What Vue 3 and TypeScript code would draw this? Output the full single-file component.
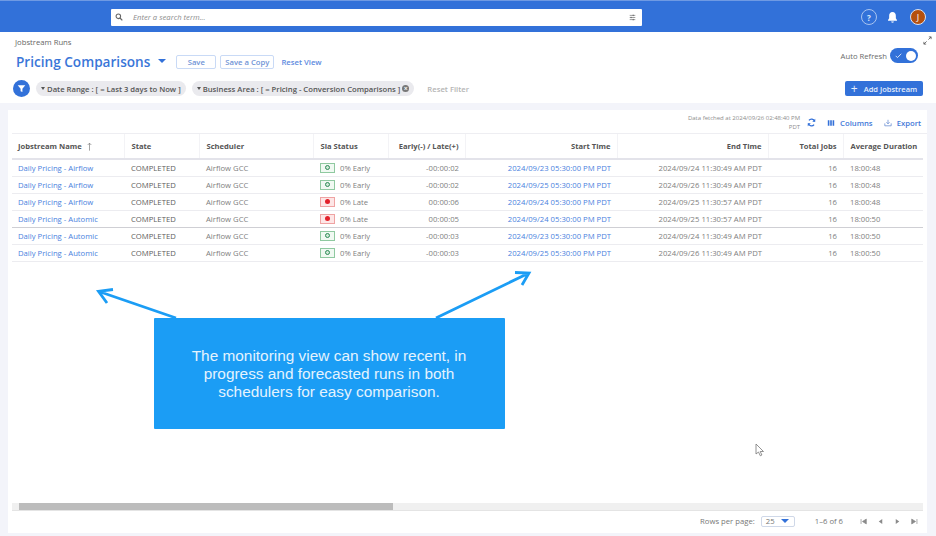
<template>
  <div class="page">
    <header class="topbar">
      <div class="search">
        <svg class="search-icon" viewBox="0 0 12 12" width="8" height="8"><circle cx="5" cy="5" r="3.4" fill="none" stroke="#666" stroke-width="1.6" /><path d="M7.5 7.5L11 11" stroke="#666" stroke-width="1.8" /></svg>
        <span class="search-text">Enter a search term...</span>
        <svg class="tune" viewBox="0 0 10 10" width="7" height="7"><path d="M1 2h8M1 5h8M1 8h8" stroke="#777" stroke-width="1" /><path d="M6 1v2M3 4v2M6 7v2" stroke="#555" stroke-width="1.2" /></svg>
      </div>
      <div class="top-icons">
        <span class="help">?</span>
        <svg viewBox="0 0 14 14" width="13" height="13"><path d="M7 1.2c-2.500 0-3.600 1.900-3.600 4v2.500L2.200 9.600v.8h9.600v-.8l-1.200-1.900V5.200c0-2.100-1.100-4-3.600-4z" fill="#fff" /><path d="M5.600 11.300h2.800c0 .8-.6 1.300-1.400 1.300s-1.400-.5-1.400-1.300z" fill="#fff" /></svg>
        <span class="avatar">J</span>
      </div>
    </header>

    <section class="head">
      <div class="head-left">
        <div class="crumb">Jobstream Runs</div>
        <div class="title-row">
          <h1>Pricing Comparisons</h1>
          <span class="caret big"></span>
          <button class="outline save">Save</button>
          <button class="outline">Save a Copy</button>
          <a class="reset">Reset View</a>
        </div>
        <div class="filter-row">
          <span class="filter-btn">
            <svg viewBox="0 0 10 10" width="9" height="9"><path d="M.8 1.500h8.400L6 5.300V9L4 8V5.300z" fill="#fff" /></svg>
          </span>
          <span class="chip"><i class="caret small"></i>Date Range : [ = Last 3 days to Now ]</span>
          <span class="chip"><i class="caret small"></i>Business Area : [ = Pricing - Conversion Comparisons ]<i class="chip-x">×</i></span>
          <span class="reset-filter">Reset Filter</span>
        </div>
      </div>
      <div class="head-right">
        <svg class="expand" viewBox="0 0 10 10" width="9" height="9"><path d="M1 9l3-3M9 1L6 4M1 9V6.500M1 9h2.500M9 1v2.500M9 1H6.500" fill="none" stroke="#555" stroke-width=".9" /></svg>
        <div class="auto">
          <span>Auto Refresh</span>
          <span class="toggle">
            <svg viewBox="0 0 10 10" width="7" height="7"><path d="M1 5.500l2.500 2.500L9 2.500" fill="none" stroke="#fff" stroke-width="1.100" /></svg>
            <i class="knob"></i>
          </span>
        </div>
        <button class="add"><b>+</b>Add Jobstream</button>
      </div>
    </section>

    <main class="card">
      <div class="toolbar">
        <span class="fetched">Data fetched at 2024/09/26 02:48:40 PM<br />PDT</span>
        <svg class="refresh" viewBox="0 0 12 12" width="9" height="9"><path d="M10 4.500A4.200 4.200 0 0 0 2.600 3.200M2 7.500a4.200 4.200 0 0 0 7.400 1.300" fill="none" stroke="#3370d8" stroke-width="1.700" /><path d="M11 1v4H7zM1 11V7h4z" fill="#3370d8" /></svg>
        <span class="tool">
          <svg viewBox="0 0 10 10" width="8" height="8"><path d="M1 1.500h2v7H1zM4 1.500h2v7H4zM7 1.500h2v7H7z" fill="#3370d8" /></svg>
          Columns
        </span>
        <span class="tool">
          <svg viewBox="0 0 10 10" width="8" height="8"><path d="M1 5.500v3h8v-3M5 1v5M3 4l2 2 2-2" fill="none" stroke="#5f86cf" stroke-width=".9" /></svg>
          Export
        </span>
      </div>

      <table>
        <colgroup>
          <col v-for="w in colWidths" :key="w.id" :style="{ width: w.px + 'px' }" />
        </colgroup>
        <thead>
          <tr>
            <th>
              Jobstream Name
              <svg class="sort" viewBox="0 0 6 10" width="5" height="9"><path d="M3 10V1M.8 3.200L3 1l2.200 2.200" fill="none" stroke="#777" stroke-width=".8" /></svg>
            </th>
            <th>State</th>
            <th>Scheduler</th>
            <th>Sla Status</th>
            <th class="r">Early(-) / Late(+)</th>
            <th class="r">Start Time</th>
            <th class="r">End Time</th>
            <th class="r">Total Jobs</th>
            <th>Average Duration</th>
          </tr>
        </thead>
        <tbody>
          <tr v-for="(row, i) in rows" :key="i" :class="{ divider: i === 3 }">
            <td class="link">{{ row.name }}</td>
            <td class="dark">COMPLETED</td>
            <td>Airflow GCC</td>
            <td>
              <span class="sla">
                <span class="badge" :class="row.early ? 'ok' : 'bad'"><i></i></span>
                {{ row.early ? '0% Early' : '0% Late' }}
              </span>
            </td>
            <td class="r">{{ row.diff }}</td>
            <td class="r link">{{ row.start }}</td>
            <td class="r">{{ row.end }}</td>
            <td class="r">16</td>
            <td>{{ row.avg }}</td>
          </tr>
        </tbody>
      </table>

      <div class="spacer"></div>

      <div class="scroll"><span class="arrow-btn"></span><span class="thumb"></span></div>
      <footer class="pager">
        <span>Rows per page:</span>
        <span class="select">25<i class="caret mid"></i></span>
        <span class="range">1–6 of 6</span>
        <span class="pages">
          <svg viewBox="0 0 10 10" width="7" height="7"><path d="M1.500 1.500v7M9 1.500v7L3.500 5z" fill="#8a8a8a" stroke="#8a8a8a" /></svg>
          <svg viewBox="0 0 10 10" width="7" height="7"><path d="M7.500 1.500v7L2.500 5z" fill="#8a8a8a" /></svg>
          <svg viewBox="0 0 10 10" width="7" height="7"><path d="M2.500 1.500v7L7.500 5z" fill="#8a8a8a" /></svg>
          <svg viewBox="0 0 10 10" width="7" height="7"><path d="M8.500 1.500v7M1 1.500v7L6.500 5z" fill="#8a8a8a" stroke="#8a8a8a" /></svg>
        </span>
      </footer>
    </main>

    <!-- annotation drawn over the screenshot -->
    <svg class="arrows" viewBox="0 0 936 536" width="936" height="536">
      <path d="M176 318L99 291.500M113 289.500L98.500 291.300L107 303M436 318L528 273.500M515 272.500L529 273L522 285" fill="none" stroke="#1b9df5" stroke-width="2.800" />
    </svg>
    <div class="callout">The monitoring view can show recent, in progress and forecasted runs in both schedulers for easy comparison.</div>
    <svg class="cursor" viewBox="0 0 10 14" width="10" height="14"><path d="M1 1v10l2.500-2 1.800 3.800 1.600-.8L5.200 8.500h3.300z" fill="#fff" stroke="#777" stroke-width=".8" /></svg>
  </div>
</template>

<script setup lang="ts">
const colWidths = [
  { id: 'name', px: 112 },
  { id: 'state', px: 75 },
  { id: 'scheduler', px: 114 },
  { id: 'sla', px: 75 },
  { id: 'diff', px: 77 },
  { id: 'start', px: 152 },
  { id: 'end', px: 151 },
  { id: 'total', px: 75 },
  { id: 'avg', px: 80 }
]

const rows = [
  { name: 'Daily Pricing - Airflow', early: true, diff: '-00:00:02', start: '2024/09/23 05:30:00 PM PDT', end: '2024/09/24 11:30:49 AM PDT', avg: '18:00:48' },
  { name: 'Daily Pricing - Airflow', early: true, diff: '-00:00:02', start: '2024/09/25 05:30:00 PM PDT', end: '2024/09/26 11:30:49 AM PDT', avg: '18:00:48' },
  { name: 'Daily Pricing - Airflow', early: false, diff: '00:00:06', start: '2024/09/24 05:30:00 PM PDT', end: '2024/09/25 11:30:57 AM PDT', avg: '18:00:48' },
  { name: 'Daily Pricing - Automic', early: false, diff: '00:00:05', start: '2024/09/24 05:30:00 PM PDT', end: '2024/09/25 11:30:57 AM PDT', avg: '18:00:50' },
  { name: 'Daily Pricing - Automic', early: true, diff: '-00:00:03', start: '2024/09/23 05:30:00 PM PDT', end: '2024/09/24 11:30:49 AM PDT', avg: '18:00:50' },
  { name: 'Daily Pricing - Automic', early: true, diff: '-00:00:03', start: '2024/09/25 05:30:00 PM PDT', end: '2024/09/26 11:30:49 AM PDT', avg: '18:00:50' }
]
</script>

<style>
html,
body {
  margin: 0;
  overflow: hidden;
  background: #fff;
}
</style>

<style scoped>
.page {
  position: relative;
  width: 936px;
  height: 536px;
  display: flex;
  flex-direction: column;
  background: #f3f4fa;
  font-family: "Open Sans", "Liberation Sans", sans-serif;
  font-size: 7.7px;
  color: #6b6b6b;
  overflow: hidden;
}
.topbar {
  height: 32px;
  flex: none;
  box-sizing: border-box;
  padding: 1px 10px 0 111px;
  display: flex;
  align-items: center;
  justify-content: space-between;
  background: #3271d9;
  border-top: 1px solid #6f9ae3;
}
.search {
  width: 531px;
  height: 17px;
  display: flex;
  align-items: center;
  background: #fff;
  border-radius: 1px;
  padding: 0 6px 0 4px;
  box-sizing: border-box;
}
.search-text {
  margin-left: 10px;
  font-style: italic;
  color: #8c8c8c;
  flex: 1;
}
.top-icons {
  display: flex;
  align-items: center;
  gap: 11px;
}
.help {
  width: 16px;
  height: 16px;
  box-sizing: border-box;
  margin-right: -2px;
  border: 1px solid #a9c4f0;
  border-radius: 50%;
  color: #dbe7fa;
  font-size: 8px;
  font-weight: 700;
  display: flex;
  align-items: center;
  justify-content: center;
}
.avatar {
  width: 16px;
  height: 16px;
  border-radius: 50%;
  background: #b5500f;
  border: 1px solid #d9e4f6;
  box-sizing: border-box;
  color: #fff;
  font-size: 9px;
  display: flex;
  align-items: center;
  justify-content: center;
}
.head {
  height: 71px;
  flex: none;
  display: flex;
  justify-content: space-between;
  box-sizing: border-box;
  padding: 5px 13px 0 15px;
  background: #fff;
}
.head-left {
  display: flex;
  flex-direction: column;
}
.crumb {
  line-height: 10px;
  color: #666;
}
.title-row {
  display: flex;
  align-items: center;
  margin-top: 4px;
  height: 22px;
}
h1 {
  margin: 0 0 0 1px;
  font-size: 13.6px;
  font-weight: 600;
  color: #3a76d8;
  line-height: 18px;
}
.caret {
  display: inline-block;
  width: 0;
  height: 0;
  border-style: solid;
  border-color: #3271d9 transparent transparent;
}
.caret.big {
  border-width: 4.5px 4px 0;
  margin: 0 10px 2px 8px;
}
.caret.small {
  border-width: 3px 2.500px 0;
  border-top-color: #555;
  margin-right: 2px;
}
.caret.mid {
  border-width: 4px 4.500px 0;
  margin-left: 6px;
}
.outline {
  height: 14px;
  padding: 0 4px;
  background: #fff;
  border: 1px solid #c9daf6;
  border-radius: 2px;
  font-family: inherit;
  font-size: 7.700px;
  font-weight: 600;
  color: #6f93d6;
  margin-right: 4px;
}
.save {
  width: 40px;
}
.reset {
  margin-left: 3px;
  font-weight: 600;
  color: #5d8ade;
}
.filter-row {
  display: flex;
  align-items: center;
  margin-top: 7px;
}
.filter-btn {
  width: 17px;
  height: 17px;
  border-radius: 50%;
  background: #3271d9;
  display: flex;
  align-items: center;
  justify-content: center;
  margin: 0 6px 0 -2px;
}
.chip {
  height: 15px;
  display: flex;
  align-items: center;
  padding: 0 5px 0 5px;
  border-radius: 8px;
  background: #eaeaee;
  color: #555;
  font-weight: 600;
  margin-right: 6px;
  white-space: nowrap;
}
.chip-x {
  width: 7px;
  height: 7px;
  margin-left: 2px;
  border-radius: 50%;
  background: #777;
  color: #fff;
  font-style: normal;
  font-size: 7px;
  line-height: 7px;
  text-align: center;
}
.reset-filter {
  margin-left: 7px;
  color: #b5b5b5;
  font-weight: 600;
}
.head-right {
  position: relative;
  display: flex;
  flex-direction: column;
  align-items: flex-end;
}
.expand {
  margin: -1px -9px 0 0;
}
.auto {
  display: flex;
  align-items: center;
  gap: 3px;
  margin: 3px 5px 0 0;
  color: #6b6b6b;
}
.toggle {
  width: 28px;
  height: 15px;
  box-sizing: border-box;
  border-radius: 8px;
  background: #3271d9;
  display: flex;
  align-items: center;
  justify-content: space-between;
  padding: 0 2px 0 5px;
}
.knob {
  width: 10px;
  height: 10px;
  border-radius: 50%;
  background: #fff;
}
.add {
  margin-top: 18px;
  width: 78px;
  height: 15px;
  padding: 0;
  border: 0;
  border-radius: 2px;
  background: #3271d9;
  color: #e6effc;
  font-family: inherit;
  font-size: 7.500px;
  font-weight: 600;
  display: flex;
  align-items: center;
  justify-content: center;
}
.add b {
  font-size: 12px;
  font-weight: 400;
  line-height: 10px;
  margin-right: 6px;
}
.card {
  flex: none;
  margin: 7px 9px 3px 8px;
  height: 423px;
  box-sizing: border-box;
  padding: 0 0 0 4px;
  background: #fff;
  display: flex;
  flex-direction: column;
}
.toolbar {
  height: 24px;
  flex: none;
  display: flex;
  align-items: center;
  justify-content: flex-end;
  gap: 6px;
  padding: 2px 6px 0 0;
  border-bottom: 1px solid #eeeef2;
  box-sizing: border-box;
}
.fetched {
  font-size: 6px;
  line-height: 8.400px;
  text-align: right;
  color: #8d8d8d;
  margin-right: 1px;
}
.tool {
  display: flex;
  align-items: center;
  gap: 5px;
  margin-left: 5px;
  color: #3f78d8;
  font-weight: 600;
}
table {
  width: 911px;
  table-layout: fixed;
  border-collapse: collapse;
}
th {
  height: 25px;
  padding: 0 6px 0 7px;
  box-sizing: border-box;
  font-weight: 700;
  font-size: 7.600px;
  color: #555;
  text-align: left;
  white-space: nowrap;
  border-right: 1px solid #f3f3f6;
  border-bottom: 2px solid #e3e3ea;
}
th:first-child,
td:first-child {
  padding-left: 6px;
}
th:last-child {
  border-right: 0;
}
.sort {
  margin-left: 3px;
  vertical-align: middle;
}
td {
  height: 17px;
  padding: 0 6px 0 7px;
  box-sizing: border-box;
  white-space: nowrap;
  color: #808080;
  border-bottom: 1px solid #ececf0;
}
tr.divider td {
  border-bottom-color: #cfcfd4;
}
.r {
  text-align: right;
}
td.link {
  color: #4a82de;
}
td.dark {
  color: #5c5c5c;
}
.sla {
  display: flex;
  align-items: center;
  gap: 5px;
}
.badge {
  width: 15px;
  height: 10px;
  box-sizing: border-box;
  display: flex;
  align-items: center;
  justify-content: center;
  border: 1px solid;
}
.badge i {
  width: 5px;
  height: 5px;
  box-sizing: border-box;
  border-radius: 50%;
}
.badge.ok {
  border-color: #8fc9a0;
  background: #f0f9f2;
}
.badge.ok i {
  border: 1.5px solid #2e8b57;
  background: #cfe8d6;
}
.badge.bad {
  border-color: #efa3a3;
  background: #fde6e6;
}
.badge.bad i {
  background: #e2202a;
}
.spacer {
  flex: 1;
}
.scroll {
  height: 8px;
  flex: none;
  display: flex;
  margin-right: 4px;
  box-sizing: border-box;
  background: #f0f0f0;
  border-bottom: 1px solid #e4e4e4;
}
.arrow-btn {
  width: 7px;
}
.thumb {
  width: 374px;
  background: #bcbcbc;
}
.pager {
  height: 22px;
  flex: none;
  box-sizing: border-box;
  display: flex;
  align-items: center;
  justify-content: flex-end;
  padding: 0 9px 2px 0;
  color: #777;
}
.select {
  height: 11px;
  width: 34px;
  box-sizing: border-box;
  margin-left: 6px;
  padding-left: 4px;
  border: 1px solid #cfd8e8;
  border-radius: 2px;
  display: flex;
  align-items: center;
  line-height: 8px;
}
.range {
  margin-left: 20px;
}
.pages {
  display: flex;
  gap: 10px;
  margin-left: 17px;
}
.arrows {
  position: absolute;
  left: 0;
  top: 0;
  pointer-events: none;
}
.callout {
  position: absolute;
  left: 153.500px;
  top: 318px;
  width: 351px;
  height: 111px;
  box-sizing: border-box;
  padding: 1px 30px 0;
  display: flex;
  align-items: center;
  justify-content: center;
  text-align: center;
  background: #1b9df5;
  border-radius: 1px;
  color: #e4f3fe;
  font-family: "Liberation Sans", Arial, sans-serif;
  font-size: 15.400px;
  line-height: 17.800px;
}
.cursor {
  position: absolute;
  left: 755px;
  top: 443px;
}
</style>
